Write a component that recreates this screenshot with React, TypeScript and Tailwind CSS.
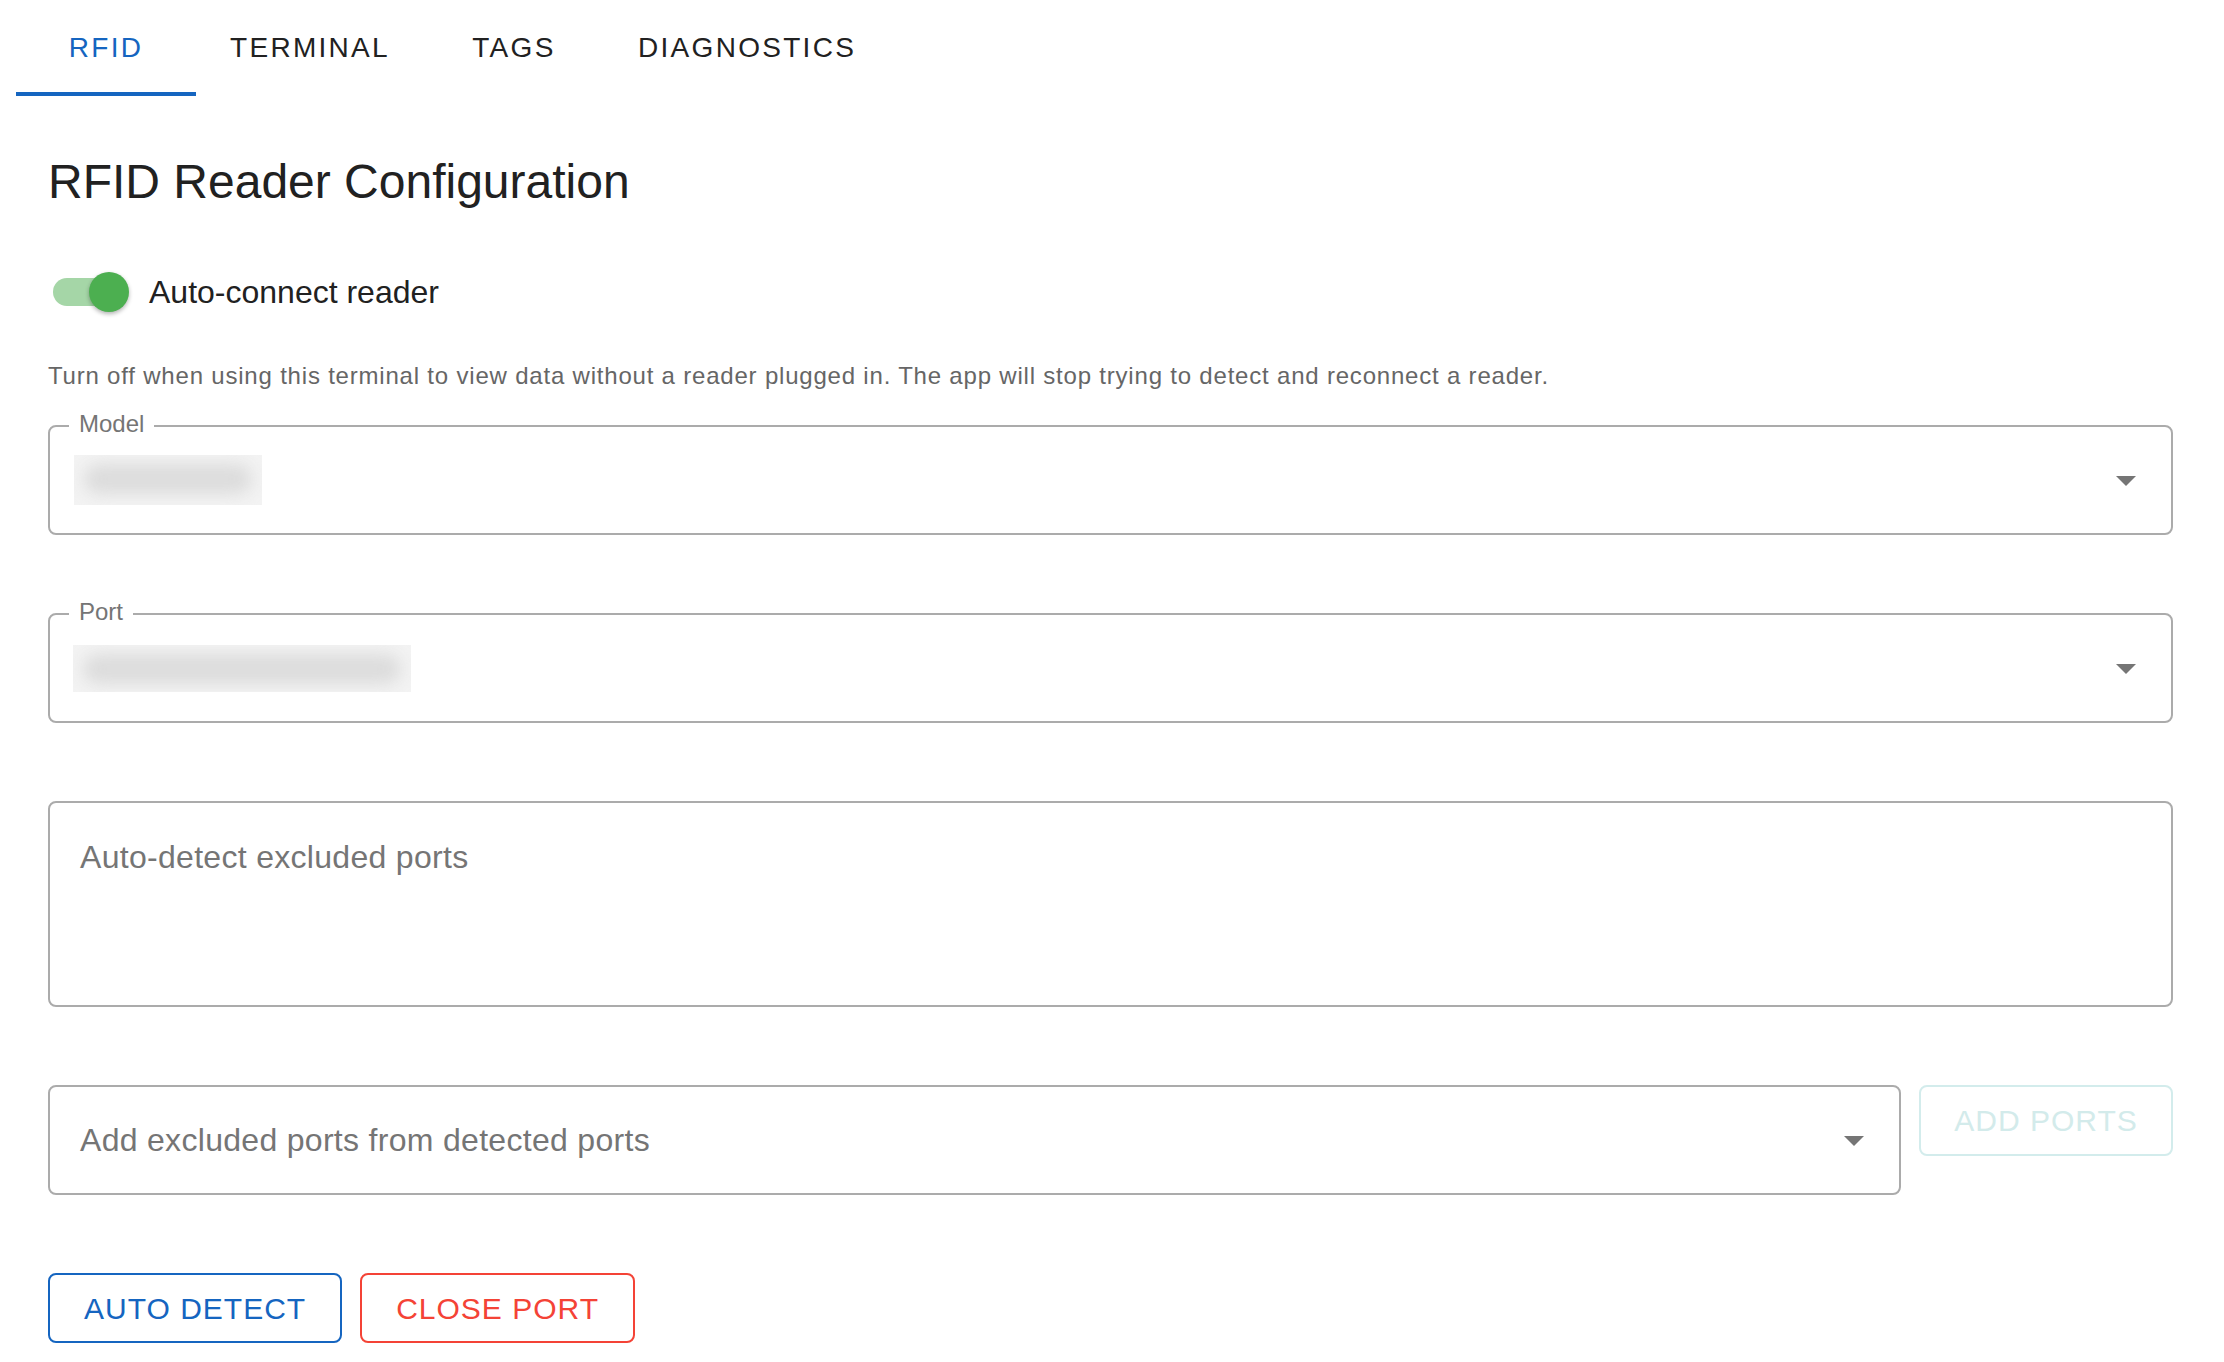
import { useState } from 'react';

const tabs = ['RFID', 'TERMINAL', 'TAGS', 'DIAGNOSTICS'];

function ArrowDrop() {
    return (
        <svg viewBox="0 0 24 24" className="h-[48px] w-[48px] shrink-0 fill-[#757575]">
            <path d="M7 10l5 5 5-5z" />
        </svg>
    );
}

function Blurred({ w, h }: { w: string; h: string }) {
    return (
        <div className={`${w} ${h} overflow-hidden bg-[#f3f3f3]`}>
            <div className="mx-[10px] mt-[9px] h-[30px] rounded-full bg-[#dcdcdc] blur-[8px]" />
        </div>
    );
}

function App() {
    const [active, setActive] = useState(0);
    const [on, setOn] = useState(true);

    return (
        <div className="min-h-screen bg-white font-['Liberation_Sans',Arial,sans-serif] text-[#212121]">
            {/* Tabs */}
            <div className="flex h-[96px] pl-[16px]">
                {tabs.map((t, i) => (
                    <button
                        key={t}
                        onClick={() => setActive(i)}
                        className={`relative flex h-[96px] min-w-[180px] items-center justify-center px-[34px] text-[28px] font-medium tracking-[2.3px] ${i === active ? 'text-[#1565c0]' : 'text-[#212121]'}`}
                    >
                        {t}
                        {i === active && (
                            <span className="absolute bottom-0 left-0 h-[4px] w-full bg-[#1565c0]" />
                        )}
                    </button>
                ))}
            </div>

            <div className="pb-[19px] pl-[48px] pr-[51px]">
                <h2 className="pt-[54px] text-[48px] leading-[64px]">
                    RFID Reader Configuration
                </h2>

                {/* Switch */}
                <div className="mt-[58px] flex h-[40px] items-center">
                    <button
                        onClick={() => setOn(!on)}
                        className="relative ml-[5px] h-[40px] w-[76px]"
                    >
                        <span
                            className={`absolute left-0 top-[6px] h-[28px] w-[68px] rounded-full ${on ? 'bg-[#a5d6a7]' : 'bg-[#bdbdbd]'}`}
                        />
                        <span
                            className={`absolute top-0 h-[40px] w-[40px] rounded-full shadow-[0_2px_4px_rgba(0,0,0,0.3)] ${on ? 'left-[36px] bg-[#4caf50]' : 'left-[-4px] bg-[#fafafa]'}`}
                        />
                    </button>
                    <span className="ml-[20px] text-[32px] leading-[48px]">
                        Auto-connect reader
                    </span>
                </div>

                <p className="mt-[44px] text-[24px] leading-[40px] tracking-[0.8px] text-[#666666]">
                    Turn off when using this terminal to view data without a
                    reader plugged in. The app will stop trying to detect and
                    reconnect a reader.
                </p>

                {/* Model */}
                <div className="relative mt-[29px] flex h-[110px] items-center justify-between rounded-[8px] border-2 border-[#ababab] pl-[24px] pr-[21px]">
                    <span className="absolute left-[19px] top-[-15px] bg-white px-[10px] text-[24px] leading-[24px] text-[#757575]">
                        Model
                    </span>
                    <Blurred w="w-[188px]" h="h-[50px]" />
                    <ArrowDrop />
                </div>

                {/* Port */}
                <div className="relative mt-[78px] flex h-[110px] items-center justify-between rounded-[8px] border-2 border-[#ababab] pl-[23px] pr-[21px]">
                    <span className="absolute left-[19px] top-[-15px] bg-white px-[10px] text-[24px] leading-[24px] text-[#757575]">
                        Port
                    </span>
                    <Blurred w="w-[338px]" h="h-[47px]" />
                    <ArrowDrop />
                </div>

                {/* Excluded ports */}
                <div className="mt-[78px] h-[206px] rounded-[8px] border-2 border-[#ababab] pl-[30px] pt-[31px]">
                    <div className="text-[32px] leading-[46px] tracking-[0.3px] text-[#757575]">
                        Auto-detect excluded ports
                    </div>
                </div>

                <div className="mt-[78px] flex items-start gap-[18px]">
                    <div className="flex h-[110px] flex-1 items-center justify-between rounded-[8px] border-2 border-[#ababab] pl-[30px] pr-[21px]">
                        <span className="text-[32px] leading-[46px] tracking-[0.3px] text-[#757575]">
                            Add excluded ports from detected ports
                        </span>
                        <ArrowDrop />
                    </div>
                    <button
                        disabled
                        className="flex h-[71px] w-[254px] items-center justify-center rounded-[8px] border-2 border-[#d3ecec] text-[30px] font-medium tracking-[1px] text-[#d3ebeb]"
                    >
                        ADD PORTS
                    </button>
                </div>

                <div className="mt-[78px] flex gap-[18px]">
                    <button className="flex h-[70px] items-center rounded-[8px] border-2 border-[#1565c0] px-[34px] text-[30px] font-medium tracking-[1px] text-[#1565c0]">
                        AUTO DETECT
                    </button>
                    <button className="flex h-[70px] items-center rounded-[8px] border-2 border-[#f44336] px-[34px] text-[30px] font-medium tracking-[1px] text-[#f44336]">
                        CLOSE PORT
                    </button>
                </div>
            </div>
        </div>
    );
}

export default App;
